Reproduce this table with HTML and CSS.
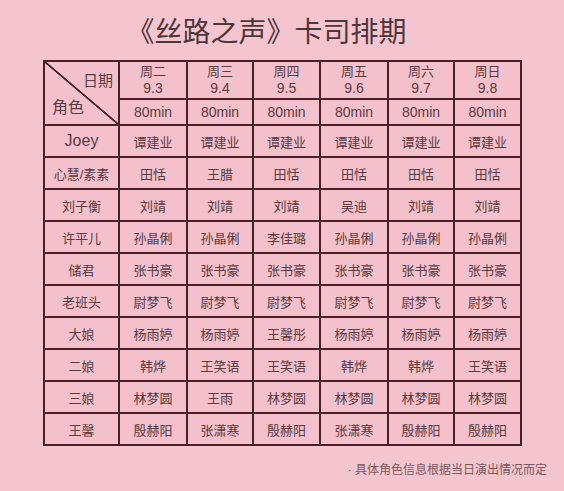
FILE: index.html
```html
<!DOCTYPE html>
<html lang="zh-CN">
<head>
<meta charset="utf-8">
<title>《丝路之声》卡司排期</title>
<link rel="stylesheet" href="styles.css">
</head>
<body>
<div class="page">
  <h1 class="title">《丝路之声》卡司排期</h1>
  <table class="cast">
    <colgroup>
      <col class="c-role">
      <col class="c-d1"><col class="c-d2"><col class="c-d3"><col class="c-d4"><col class="c-d5"><col class="c-d6">
    </colgroup>
    <thead>
      <tr class="h-date">
        <th class="corner" rowspan="2">
          <div class="corner-in">
            <span class="corner-top">日期</span>
            <span class="corner-bottom">角色</span>
          </div>
        </th>
        <th><span class="day">周二</span><span class="date">9.3</span></th>
        <th><span class="day">周三</span><span class="date">9.4</span></th>
        <th><span class="day">周四</span><span class="date">9.5</span></th>
        <th><span class="day">周五</span><span class="date">9.6</span></th>
        <th><span class="day">周六</span><span class="date">9.7</span></th>
        <th><span class="day">周日</span><span class="date">9.8</span></th>
      </tr>
      <tr class="h-len">
        <th>80min</th><th>80min</th><th>80min</th><th>80min</th><th>80min</th><th>80min</th>
      </tr>
    </thead>
    <tbody>
      <tr><th class="role role-en">Joey</th><td>谭建业</td><td>谭建业</td><td>谭建业</td><td>谭建业</td><td>谭建业</td><td>谭建业</td></tr>
      <tr><th class="role">心慧/素素</th><td>田恬</td><td>王腊</td><td>田恬</td><td>田恬</td><td>田恬</td><td>田恬</td></tr>
      <tr><th class="role">刘子衡</th><td>刘靖</td><td>刘靖</td><td>刘靖</td><td>吴迪</td><td>刘靖</td><td>刘靖</td></tr>
      <tr><th class="role">许平儿</th><td>孙晶俐</td><td>孙晶俐</td><td>李佳璐</td><td>孙晶俐</td><td>孙晶俐</td><td>孙晶俐</td></tr>
      <tr><th class="role">储君</th><td>张书豪</td><td>张书豪</td><td>张书豪</td><td>张书豪</td><td>张书豪</td><td>张书豪</td></tr>
      <tr><th class="role">老班头</th><td>尉梦飞</td><td>尉梦飞</td><td>尉梦飞</td><td>尉梦飞</td><td>尉梦飞</td><td>尉梦飞</td></tr>
      <tr><th class="role">大娘</th><td>杨雨婷</td><td>杨雨婷</td><td>王馨彤</td><td>杨雨婷</td><td>杨雨婷</td><td>杨雨婷</td></tr>
      <tr><th class="role">二娘</th><td>韩烨</td><td>王笑语</td><td>王笑语</td><td>韩烨</td><td>韩烨</td><td>王笑语</td></tr>
      <tr><th class="role">三娘</th><td>林梦圆</td><td>王雨</td><td>林梦圆</td><td>林梦圆</td><td>林梦圆</td><td>林梦圆</td></tr>
      <tr><th class="role">王馨</th><td>殷赫阳</td><td>张潇寒</td><td>殷赫阳</td><td>张潇寒</td><td>殷赫阳</td><td>殷赫阳</td></tr>
    </tbody>
  </table>
  <p class="note">· 具体角色信息根据当日演出情况而定</p>
</div>
</body>
</html>
```

FILE: styles.css
```css
html, body {
  margin: 0;
  padding: 0;
  background: #f4c5cf;
}

.page {
  width: 564px;
  height: 491px;
  overflow: hidden;
  font-family: "Liberation Sans", "Noto Sans CJK SC", sans-serif;
  color: #5a3c42;
}

.title {
  margin: 0;
  padding: 6px 31px 0 0;
  height: 54px;
  line-height: 54px;
  font-size: 28px;
  font-weight: normal;
  text-align: center;
  color: #4e373b;
}

.cast {
  border-collapse: collapse;
  table-layout: fixed;
  width: 477px;
  margin: 0 0 0 43px;
  background: #f3c0cb;
}

.c-role { width: 75px; }
.c-d1 { width: 68px; }
.c-d2 { width: 66px; }
.c-d3 { width: 67px; }
.c-d4 { width: 68px; }
.c-d5 { width: 66px; }
.c-d6 { width: 67px; }

.cast th,
.cast td {
  border: 2px solid #4b1f27;
  padding: 0;
  text-align: center;
  font-weight: normal;
  font-size: 13px;
  color: #5a3c42;
  height: 30px;
}

.cast .h-date th {
  height: 36px;
  line-height: 16px;
}

.cast .h-len th {
  height: 24px;
  font-size: 14px;
}

.day,
.date {
  display: block;
  line-height: 16px;
}

.date {
  font-size: 14px;
}

.corner {
  background: linear-gradient(to top right,
    transparent calc(50% - 1.2px),
    #4b1f27 calc(50% - 0.6px),
    #4b1f27 calc(50% + 0.6px),
    transparent calc(50% + 1.2px));
}

.corner-in {
  height: 62px;
  display: flex;
  flex-direction: column;
  justify-content: space-between;
  padding: 10px 5px 7px 7px;
  box-sizing: border-box;
}

.corner-top {
  align-self: flex-end;
  font-size: 15px;
  line-height: 18px;
}

.corner-bottom {
  align-self: flex-start;
  font-size: 16px;
  line-height: 18px;
}

.cast .role {
  font-size: 13px;
}

.cast .role-en {
  font-size: 16px;
}

.note {
  margin: 16px 17px 0 0;
  font-size: 12px;
  line-height: 16px;
  text-align: right;
  color: #7a5a60;
}
```
